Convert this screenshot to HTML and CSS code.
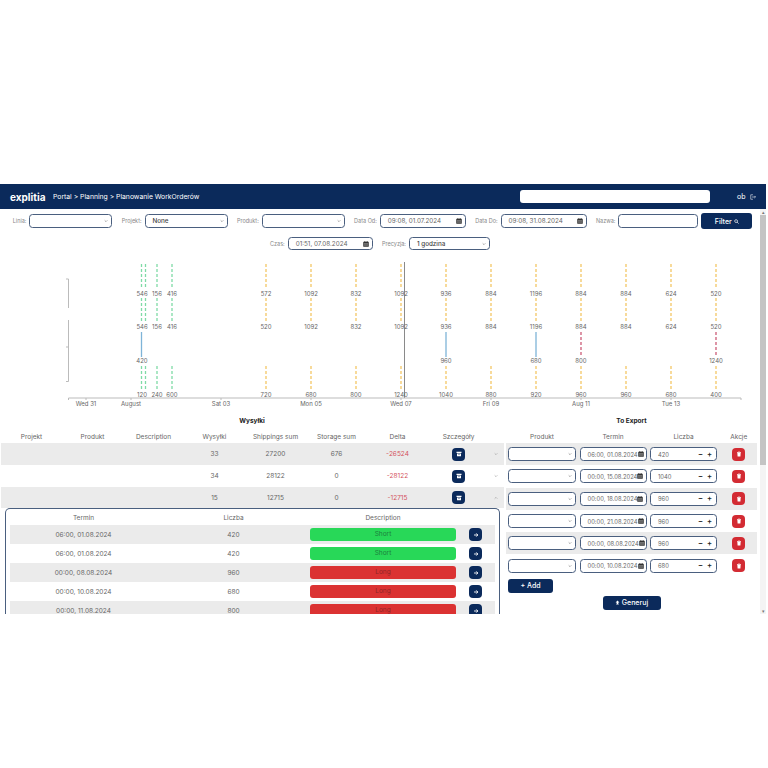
FILE: index.html
```html
<!DOCTYPE html>
<html lang="pl">
<head>
    <meta charset="UTF-8">
    <meta name="viewport" content="width=device-width, initial-scale=1.0">
    <title>Planowanie WorkOrderów</title>
    <link rel="stylesheet" href="styles.css">
</head>
<body>
    <!-- Icons -->
    <svg class="icon-defs">
        <symbol id="i-calendar" viewBox="0 0 12 12"><path fill="currentColor" d="M3 0h1.500v1.500h3V0H9v1.500h1.500a1 1 0 0 1 1 1v8a1 1 0 0 1-1 1h-9a1 1 0 0 1-1-1v-8a1 1 0 0 1 1-1H3zM2 5v5h8V5z"/><path fill="currentColor" d="M2 5h8v5H2z" opacity=".75"/></symbol>
        <symbol id="i-box" viewBox="0 0 12 12"><path fill="currentColor" d="M1 1.500h10v2.500H1zM2 5h8v5.500H2z"/><path fill="#0b2a5b" d="M4.500 6.200h3v1h-3z"/></symbol>
        <symbol id="i-arrow" viewBox="0 0 12 12"><path fill="none" stroke="currentColor" stroke-width="1.800" d="M2 6h7.500M6.500 2.800 9.700 6l-3.200 3.200"/></symbol>
        <symbol id="i-trash" viewBox="0 0 12 12"><path fill="currentColor" d="M2 2h2.500l.5-.8h2l.5.8H10v1.300H2zM2.700 4h6.600l-.5 7H3.200z"/></symbol>
        <symbol id="i-search" viewBox="0 0 12 12"><circle cx="5" cy="5" r="3.400" fill="none" stroke="currentColor" stroke-width="1.600"/><path stroke="currentColor" stroke-width="1.800" d="m7.500 7.500 3.500 3.500"/></symbol>
        <symbol id="i-logout" viewBox="0 0 12 12"><path fill="none" stroke="currentColor" stroke-width="1.100" d="M6 1.500H1.500v9H6M4 6h7M8.800 3.800 11 6 8.800 8.200"/></symbol>
        <symbol id="i-upload" viewBox="0 0 12 12"><path fill="currentColor" d="M6 1 10.500 6H8v3.500H4V6H1.500zM3 10.300h6v1.200H3z"/></symbol>
        <symbol id="i-down" viewBox="0 0 12 12"><path fill="none" stroke="currentColor" stroke-width="1.800" d="M2 4l4 4 4-4"/></symbol>
        <symbol id="i-up" viewBox="0 0 12 12"><path fill="none" stroke="currentColor" stroke-width="1.800" d="M2 8l4-4 4 4"/></symbol>
    </svg>

    <div class="app">
        <header class="topbar">
            <span class="logo">explitia</span>
            <span class="crumbs">Portal &gt; Planning &gt; Planowanie WorkOrderów</span>
            <input class="search" type="text">
            <span class="user">ob</span>
            <svg class="logout"><use href="#i-logout"/></svg>
        </header>

        <div class="workspace">
            <main class="content">
                <!-- Filters -->
                <section class="filters">
                    <div class="filter-row">
                        <label class="filter">Linia:
                            <span class="field field-select"><svg class="chev"><use href="#i-down"/></svg></span>
                        </label>
                        <label class="filter">Projekt:
                            <span class="field field-select strong">None<svg class="chev"><use href="#i-down"/></svg></span>
                        </label>
                        <label class="filter">Produkt:
                            <span class="field field-select"><svg class="chev"><use href="#i-down"/></svg></span>
                        </label>
                        <label class="filter">Data Od:
                            <span class="field field-date">09:08, 01.07.2024<svg class="cal"><use href="#i-calendar"/></svg></span>
                        </label>
                        <label class="filter">Data Do:
                            <span class="field field-date">09:08, 31.08.2024<svg class="cal"><use href="#i-calendar"/></svg></span>
                        </label>
                        <label class="filter">Nazwa:
                            <span class="field field-name"></span>
                        </label>
                        <button class="btn filter-btn">Filter <svg class="btn-icon"><use href="#i-search"/></svg></button>
                    </div>
                    <div class="filter-row filter-row-small">
                        <label class="filter">Czas:
                            <span class="field field-date">01:51, 07.08.2024<svg class="cal"><use href="#i-calendar"/></svg></span>
                        </label>
                        <label class="filter">Precyzja:
                            <span class="field field-select strong">1 godzina<svg class="chev"><use href="#i-down"/></svg></span>
                        </label>
                    </div>
                </section>

                <!-- Chart -->
                <svg class="chart" viewBox="0 254 760 160" width="760" height="160">
                    <path class="dash green" d="M141.500 264V289M141.500 298V323M141.500 366V391M145.500 264V289M145.500 298V323M145.500 366V391M157 264V289M157 298V323M157 366V391M172 264V289M172 298V323M172 366V391"/>
                    <path class="dash yellow" d="M266 264V289M266 298V323M266 366V391M311 264V289M311 298V323M311 366V391M356 264V289M356 298V323M356 366V391M401 264V289M401 298V323M401 366V391M446 264V289M446 298V323M446 366V391M491 264V289M491 298V323M491 366V391M536 264V289M536 298V323M536 366V391M581 264V289M581 298V323M581 366V391M626 264V289M626 298V323M626 366V391M671 264V289M671 298V323M671 366V391M716 264V289M716 298V323M716 366V391"/>
                    <path class="solid" d="M141.500 332V357M446 332V357M536 332V357"/>
                    <path class="dash red" d="M581 332V357M716 332V357"/>
                    <path class="now" d="M404.500 262V398"/>
                    <path class="axis" d="M66 279H68.500V308M68.500 320V381.500H66M66 347H68.500M68.500 400V398H741V400M86 398V400M131 398V400M221 398V400M311 398V400M401 398V400M491 398V400M581 398V400M671 398V400"/>
                    <g class="labels">
                        <text x="142" y="296">546</text><text x="157" y="296">156</text><text x="172" y="296">416</text><text x="266" y="296">572</text><text x="311" y="296">1092</text><text x="356" y="296">832</text><text x="401" y="296">1092</text><text x="446" y="296">936</text><text x="491" y="296">884</text><text x="536" y="296">1196</text><text x="581" y="296">884</text><text x="626" y="296">884</text><text x="671" y="296">624</text><text x="716" y="296">520</text>
                        <text x="142" y="329">546</text><text x="157" y="329">156</text><text x="172" y="329">416</text><text x="266" y="329">520</text><text x="311" y="329">1092</text><text x="356" y="329">832</text><text x="401" y="329">1092</text><text x="446" y="329">936</text><text x="491" y="329">884</text><text x="536" y="329">1196</text><text x="581" y="329">884</text><text x="626" y="329">884</text><text x="671" y="329">624</text><text x="716" y="329">520</text>
                        <text x="142" y="363">420</text><text x="446" y="363">960</text><text x="536" y="363">680</text><text x="581" y="363">800</text><text x="716" y="363">1240</text>
                        <text x="142" y="397">120</text><text x="157" y="397">240</text><text x="172" y="397">600</text><text x="266" y="397">720</text><text x="311" y="397">680</text><text x="356" y="397">800</text><text x="401" y="397">1240</text><text x="446" y="397">1040</text><text x="491" y="397">880</text><text x="536" y="397">920</text><text x="581" y="397">960</text><text x="626" y="397">960</text><text x="671" y="397">680</text><text x="716" y="397">400</text>
                        <text x="86" y="405.500">Wed 31</text><text x="131" y="405.500">August</text><text x="221" y="405.500">Sat 03</text><text x="311" y="405.500">Mon 05</text><text x="401" y="405.500">Wed 07</text><text x="491" y="405.500">Fri 09</text><text x="581" y="405.500">Aug 11</text><text x="671" y="405.500">Tue 13</text>
                    </g>
                </svg>

                <div class="panels">
                    <!-- Shipments -->
                    <section class="shipments">
                        <h3 class="panel-title">Wysyłki</h3>
                        <div class="ship-row ship-head">
                            <span>Projekt</span><span>Produkt</span><span>Description</span><span>Wysyłki</span><span>Shippings sum</span><span>Storage sum</span><span>Delta</span><span>Szczegóły</span><span></span>
                        </div>
                        <div class="ship-row shaded">
                            <span></span><span></span><span></span><span>33</span><span>27200</span><span>676</span><span class="delta">-26524</span>
                            <span><button class="icon-btn navy"><svg><use href="#i-box"/></svg></button></span>
                            <svg class="toggle"><use href="#i-down"/></svg>
                        </div>
                        <div class="ship-row">
                            <span></span><span></span><span></span><span>34</span><span>28122</span><span>0</span><span class="delta">-28122</span>
                            <span><button class="icon-btn navy"><svg><use href="#i-box"/></svg></button></span>
                            <svg class="toggle"><use href="#i-down"/></svg>
                        </div>
                        <div class="ship-row shaded short-row">
                            <span></span><span></span><span></span><span>15</span><span>12715</span><span>0</span><span class="delta">-12715</span>
                            <span><button class="icon-btn navy"><svg><use href="#i-box"/></svg></button></span>
                            <svg class="toggle"><use href="#i-up"/></svg>
                        </div>

                        <div class="details">
                            <div class="detail-row detail-head">
                                <span>Termin</span><span>Liczba</span><span>Description</span><span></span>
                            </div>
                            <div class="detail-row shaded">
                                <span>06:00, 01.08.2024</span><span>420</span><span class="pill pill-short">Short</span>
                                <span><button class="icon-btn navy"><svg><use href="#i-arrow"/></svg></button></span>
                            </div>
                            <div class="detail-row">
                                <span>06:00, 01.08.2024</span><span>420</span><span class="pill pill-short">Short</span>
                                <span><button class="icon-btn navy"><svg><use href="#i-arrow"/></svg></button></span>
                            </div>
                            <div class="detail-row shaded">
                                <span>00:00, 08.08.2024</span><span>960</span><span class="pill pill-long">Long</span>
                                <span><button class="icon-btn navy"><svg><use href="#i-arrow"/></svg></button></span>
                            </div>
                            <div class="detail-row">
                                <span>00:00, 10.08.2024</span><span>680</span><span class="pill pill-long">Long</span>
                                <span><button class="icon-btn navy"><svg><use href="#i-arrow"/></svg></button></span>
                            </div>
                            <div class="detail-row shaded">
                                <span>00:00, 11.08.2024</span><span>800</span><span class="pill pill-long">Long</span>
                                <span><button class="icon-btn navy"><svg><use href="#i-arrow"/></svg></button></span>
                            </div>
                        </div>
                    </section>

                    <!-- Export -->
                    <section class="export">
                        <h3 class="panel-title">To Export</h3>
                        <div class="export-row export-head">
                            <span>Produkt</span><span>Termin</span><span>Liczba</span><span>Akcje</span>
                        </div>
                        <div class="export-row shaded">
                            <span class="field"><svg class="chev"><use href="#i-down"/></svg></span>
                            <span class="field">06:00, 01.08.2024<svg class="cal"><use href="#i-calendar"/></svg></span>
                            <span class="field">420<span class="stepper">− +</span></span>
                            <span class="cell-center"><button class="icon-btn danger"><svg><use href="#i-trash"/></svg></button></span>
                        </div>
                        <div class="export-row">
                            <span class="field"><svg class="chev"><use href="#i-down"/></svg></span>
                            <span class="field">00:00, 15.08.2024<svg class="cal"><use href="#i-calendar"/></svg></span>
                            <span class="field">1040<span class="stepper">− +</span></span>
                            <span class="cell-center"><button class="icon-btn danger"><svg><use href="#i-trash"/></svg></button></span>
                        </div>
                        <div class="export-row shaded">
                            <span class="field"><svg class="chev"><use href="#i-down"/></svg></span>
                            <span class="field">00:00, 18.08.2024<svg class="cal"><use href="#i-calendar"/></svg></span>
                            <span class="field">960<span class="stepper">− +</span></span>
                            <span class="cell-center"><button class="icon-btn danger"><svg><use href="#i-trash"/></svg></button></span>
                        </div>
                        <div class="export-row">
                            <span class="field"><svg class="chev"><use href="#i-down"/></svg></span>
                            <span class="field">00:00, 21.08.2024<svg class="cal"><use href="#i-calendar"/></svg></span>
                            <span class="field">960<span class="stepper">− +</span></span>
                            <span class="cell-center"><button class="icon-btn danger"><svg><use href="#i-trash"/></svg></button></span>
                        </div>
                        <div class="export-row shaded">
                            <span class="field"><svg class="chev"><use href="#i-down"/></svg></span>
                            <span class="field">00:00, 08.08.2024<svg class="cal"><use href="#i-calendar"/></svg></span>
                            <span class="field">960<span class="stepper">− +</span></span>
                            <span class="cell-center"><button class="icon-btn danger"><svg><use href="#i-trash"/></svg></button></span>
                        </div>
                        <div class="export-row">
                            <span class="field"><svg class="chev"><use href="#i-down"/></svg></span>
                            <span class="field">00:00, 10.08.2024<svg class="cal"><use href="#i-calendar"/></svg></span>
                            <span class="field">680<span class="stepper">− +</span></span>
                            <span class="cell-center"><button class="icon-btn danger"><svg><use href="#i-trash"/></svg></button></span>
                        </div>
                        <button class="btn add-btn">+ Add</button>
                        <button class="btn generate-btn"><svg class="btn-icon"><use href="#i-upload"/></svg> Generuj</button>
                    </section>
                </div>
            </main>

            <!-- Scrollbar -->
            <div class="scrollbar">
                <span class="scroll-arrow">▴</span>
                <span class="scroll-thumb"></span>
                <span class="scroll-track"></span>
                <span class="scroll-arrow">▾</span>
            </div>
        </div>
    </div>
</body>
</html>
```

FILE: styles.css
```css
/* General Styling */
body {
    font-family: 'Inter', 'Open Sans', sans-serif;
    background-color: #fff;
    color: #666;
    font-size: 6.5px;
    margin: 0;
    padding: 0;
}

.icon-defs {
    display: none;
}

.app {
    width: 766px;
    height: 430px;
    margin-top: 184px;
    overflow: hidden;
}

/* Header */
.topbar {
    display: flex;
    align-items: center;
    height: 25px;
    padding-left: 10px;
    background-color: #0b2a5b;
    color: #fff;
    box-sizing: border-box;
}

.logo {
    width: 43px;
    font-size: 10px;
    font-weight: 700;
}

.crumbs {
    width: 467px;
    font-size: 6.800px;
}

.search {
    width: 190px;
    height: 13px;
    padding: 0;
    background-color: #fff;
    border: 0;
    border-radius: 3px;
}

.user {
    margin-left: 27px;
    font-size: 7px;
}

.logout {
    width: 6px;
    height: 6px;
    margin-left: 5px;
}

.workspace {
    display: flex;
}

.content {
    width: 760px;
}

/* Filters */
.filters {
    padding: 4px 0;
}

.filter-row {
    display: flex;
    justify-content: center;
    align-items: center;
    gap: 9.400px;
    height: 16px;
    padding-left: 5px;
    box-sizing: border-box;
}

.filter-row-small {
    height: 13px;
    margin-top: 8px;
    padding-left: 0;
}

.filter {
    display: flex;
    align-items: center;
    gap: 3px;
    font-size: 5.500px;
    color: #888;
}

.field {
    display: flex;
    align-items: center;
    height: 14px;
    padding-left: 7px;
    font-size: 6.300px;
    white-space: nowrap;
    color: #666;
    background-color: #fff;
    border: 1.300px solid #4a5f7f;
    border-radius: 3.500px;
    box-sizing: border-box;
}

.field-select {
    width: 83px;
}

.field-date {
    width: 86px;
}

.field-name {
    width: 80px;
}

.filter-row-small .field {
    height: 13px;
}

.filter-row-small .field-select {
    width: 81px;
}

.filter-row-small .field-date {
    width: 85px;
}

.strong {
    color: #444;
    font-weight: 500;
}

.chev {
    flex: none;
    width: 4px;
    height: 4px;
    margin-left: auto;
    margin-right: 3px;
    color: #777;
}

.cal {
    flex: none;
    width: 6px;
    height: 6px;
    margin-left: auto;
    margin-right: 3px;
    color: #333;
}

.btn {
    display: flex;
    align-items: center;
    justify-content: center;
    gap: 2px;
    padding: 0;
    color: #fff;
    background-color: #0b2a5b;
    font-family: inherit;
    font-size: 7px;
    font-weight: 500;
    border: 0;
    border-radius: 3px;
}

.btn-icon {
    width: 5px;
    height: 5px;
}

.filter-btn {
    width: 51px;
    height: 16px;
    margin-left: -6.500px;
}

/* Chart */
.chart {
    display: block;
}

.dash,
.solid,
.now,
.axis {
    fill: none;
}

.dash {
    stroke-width: 1.300;
    stroke-dasharray: 3 2;
}

.green {
    stroke: #7fdaa6;
}

.yellow {
    stroke: #f3c766;
}

.red {
    stroke: #cc5c78;
}

.solid {
    stroke: #7fb4d8;
    stroke-width: 1.300;
}

.now {
    stroke: #8a8a8a;
}

.axis {
    stroke: #bbb;
}

.labels text {
    font-size: 6px;
    fill: #666;
    text-anchor: middle;
}

/* Tables */
.panels {
    display: flex;
    gap: 2px;
}

.shipments {
    width: 504px;
}

.export {
    width: 251px;
}

.panel-title {
    height: 16px;
    margin: 0;
    font-size: 6.500px;
    font-weight: 700;
    line-height: 14px;
    text-align: center;
    color: #222;
}

.shaded {
    background-color: #ebebeb;
}

.ship-row {
    display: grid;
    grid-template-columns: repeat(8, 61px) 15px;
    align-items: center;
    height: 22px;
    margin-left: 1px;
    text-align: center;
}

.short-row {
    height: 21px;
}

.ship-row.ship-head,
.export-row.export-head {
    height: 13px;
    font-size: 6.500px;
}

.delta {
    color: #d4525c;
}

.toggle {
    width: 4px;
    height: 4px;
    margin-left: 5px;
    color: #999;
}

.icon-btn {
    display: inline-flex;
    align-items: center;
    justify-content: center;
    width: 13px;
    height: 13px;
    padding: 0;
    color: #fff;
    border: 0;
    border-radius: 4px;
    vertical-align: middle;
}

.icon-btn svg {
    width: 6px;
    height: 6px;
}

.navy {
    background-color: #0b2a5b;
}

.danger {
    background-color: #d32b33;
}

/* Nested details */
.details {
    height: 120px;
    margin: 0 4px 0 5px;
    padding: 0 4px;
    border: 1px solid #4a5f7f;
    border-bottom: 0;
    border-radius: 5px 5px 0 0;
    box-sizing: border-box;
}

.detail-row {
    display: grid;
    grid-template-columns: 147px 153px 146px 1fr;
    align-items: center;
    height: 19px;
    text-align: center;
}

.detail-row.detail-head {
    height: 16px;
    padding-top: 2px;
    box-sizing: border-box;
}

.pill {
    height: 13px;
    line-height: 13px;
    border-radius: 3px;
}

.pill-short {
    color: #1c7f3c;
    background-color: #28d858;
}

.pill-long {
    color: #8e2626;
    background-color: #db3232;
}

/* Export */
.export-row {
    display: grid;
    grid-template-columns: 68px 67px 67px 1fr;
    column-gap: 3.500px;
    align-items: center;
    height: 22.300px;
    padding-left: 2px;
    text-align: center;
}

.export-row .field {
    font-size: 5.800px;
}

.stepper {
    margin-left: auto;
    margin-right: 4px;
    color: #222;
    font-size: 7.500px;
    font-weight: 600;
    word-spacing: 2px;
}

.cell-center {
    text-align: center;
}

.add-btn {
    width: 45px;
    height: 14px;
    margin: 2px 0 0 2px;
}

.generate-btn {
    width: 58px;
    height: 14px;
    margin: 3px auto 0;
}

/* Scrollbar */
.scrollbar {
    display: flex;
    flex-direction: column;
    align-items: center;
    width: 6px;
    height: 405px;
    background-color: #f4f4f4;
}

.scroll-arrow {
    height: 6px;
    font-size: 5px;
    line-height: 6px;
    color: #777;
}

.scroll-thumb {
    width: 100%;
    height: 250px;
    background-color: #c4c4c4;
}

.scroll-track {
    flex: 1;
}
```
